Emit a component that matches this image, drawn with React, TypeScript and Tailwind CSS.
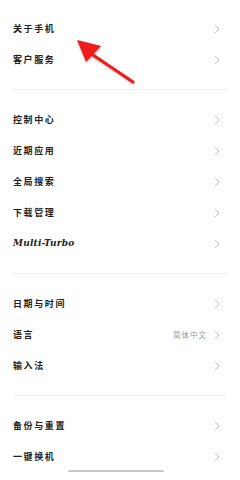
import React from "react";

const Chevron = () => (
  <svg width="6" height="10" viewBox="0 0 6 10" className="shrink-0">
    <path d="M1 1 L5 5 L1 9" fill="none" stroke="#c4c4c4" strokeWidth="1" />
  </svg>
);

const cjk = { fontFamily: '"Noto Sans CJK SC", "Noto Sans", sans-serif' };

function Row({ label, value, latin }: { label: string; value?: string; latin?: boolean }) {
  return (
    <div className="flex h-[31px] items-center justify-between pl-[13px] pr-[20px]">
      {latin ? (
        <span
          className="text-[9px] italic font-bold tracking-[0.2px] text-[#222]"
          style={{ fontFamily: '"DejaVu Serif", serif' }}
        >
          {label}
        </span>
      ) : (
        <span className="text-[9px] font-bold tracking-[1.6px] text-[#222]" style={cjk}>
          {label}
        </span>
      )}
      <div className="flex items-center gap-[7px]">
        {value && (
          <span className="text-[7.5px] tracking-[1px] text-[#9a9a9a]" style={cjk}>
            {value}
          </span>
        )}
        <Chevron />
      </div>
    </div>
  );
}

const Divider = () => <div className="mx-[13px] my-[14px] h-px bg-[#f0f0f0]" />;

export default function App() {
  return (
    <div className="relative h-[480px] w-[240px] overflow-hidden bg-white pt-[13px]">
      <Row label="关于手机" />
      <Row label="客户服务" />
      <Divider />
      <Row label="控制中心" />
      <Row label="近期应用" />
      <Row label="全局搜索" />
      <Row label="下载管理" />
      <Row label="Multi-Turbo" latin />
      <Divider />
      <Row label="日期与时间" />
      <Row label="语言" value="简体中文" />
      <Row label="输入法" />
      <Divider />
      <Row label="备份与重置" />
      <Row label="一键换机" />

      <div className="absolute bottom-[8px] left-[68px] h-[2px] w-[96px] rounded-full bg-[#c8c8c8]" />

      <svg className="absolute left-0 top-0" width="240" height="120" viewBox="0 0 240 120">
        <defs>
          <filter id="sh" x="-20%" y="-20%" width="140%" height="140%">
            <feDropShadow dx="0.5" dy="1" stdDeviation="1" floodColor="#000" floodOpacity="0.3" />
          </filter>
        </defs>
        <g filter="url(#sh)">
          <line x1="133" y1="82" x2="90" y2="53" stroke="#ee1c1c" strokeWidth="3" strokeLinecap="round" />
          <polygon points="77,40 101,46 86,62" fill="#ee1c1c" />
        </g>
      </svg>
    </div>
  );
}
